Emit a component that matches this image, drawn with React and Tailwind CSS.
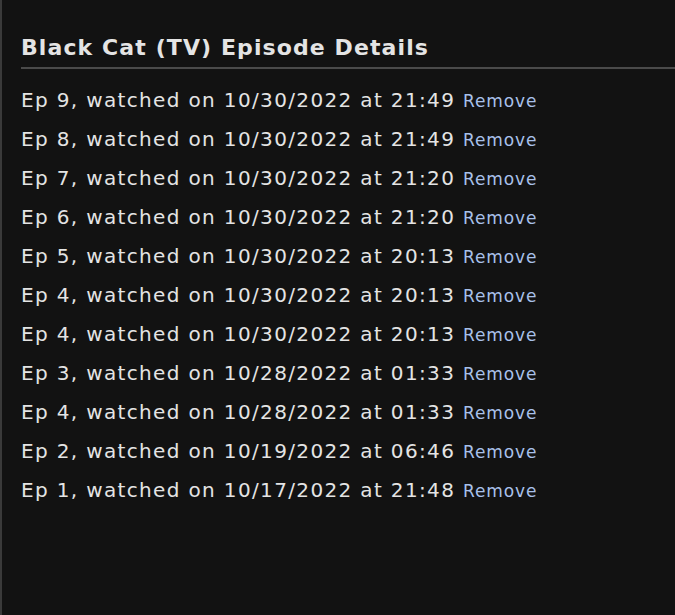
const rows = [
  ['9', '10/30/2022', '21:49'],
  ['8', '10/30/2022', '21:49'],
  ['7', '10/30/2022', '21:20'],
  ['6', '10/30/2022', '21:20'],
  ['5', '10/30/2022', '20:13'],
  ['4', '10/30/2022', '20:13'],
  ['4', '10/30/2022', '20:13'],
  ['3', '10/28/2022', '01:33'],
  ['4', '10/28/2022', '01:33'],
  ['2', '10/19/2022', '06:46'],
  ['1', '10/17/2022', '21:48'],
]

export default function App() {
  return (
    <div className="min-h-[615px] bg-[#121212] border-l-2 border-[#3a3a3a] pl-[19px] pt-[31px] text-[#e4e4e4]"
         style={{ fontFamily: '"DejaVu Sans", Verdana, sans-serif' }}>
      <h2 className="text-[22px] font-bold leading-[34px] tracking-[1.1px] border-b-2 border-[#4a4a4a] pb-[2px]">
        Black Cat (TV) Episode Details
      </h2>
      <ul className="pt-[12px]">
        {rows.map((r, i) => (
          <li key={i} className="h-[39px] text-[20px] leading-[39px] tracking-[1.35px] whitespace-nowrap">
            Ep {r[0]}, watched on {r[1]} at {r[2]}{' '}
            <a href="#" className="text-[17px] leading-[39px] tracking-[0.9px] text-[#a9c1ea]">Remove</a>
          </li>
        ))}
      </ul>
    </div>
  )
}
